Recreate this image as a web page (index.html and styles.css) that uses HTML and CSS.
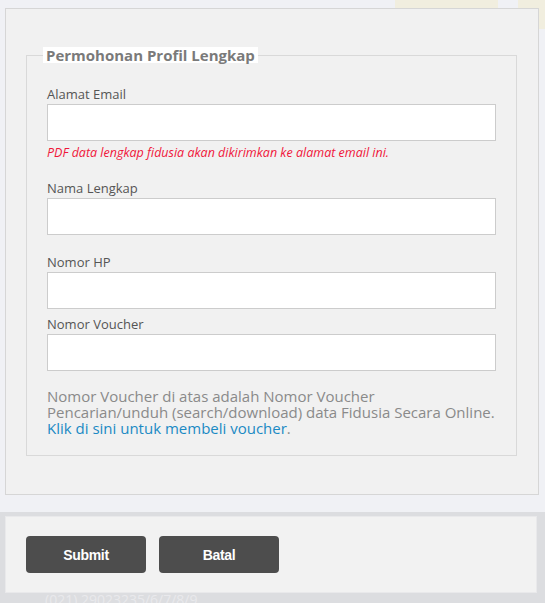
FILE: index.html
```html
<!DOCTYPE html>
<html lang="id">
<head>
<meta charset="utf-8">
<title>Permohonan Profil Lengkap</title>
<link rel="stylesheet" href="styles.css">
</head>
<body>
<div class="backdrop">
  <div class="bg-tab bg-tab-a"></div>
  <div class="bg-tab bg-tab-b"></div>
  <div class="bg-footer"><span class="bg-phone">(021) 29023235/6/7/8/9</span></div>
</div>
<div class="page">
  <div class="panel">
    <fieldset class="box">
      <legend class="box-title">Permohonan Profil Lengkap</legend>
      <div class="group g-email">
        <label class="lbl">Alamat Email</label>
        <input class="field" type="text">
        <p class="note">PDF data lengkap fidusia akan dikirimkan ke alamat email ini.</p>
      </div>
      <div class="group g-name">
        <label class="lbl">Nama Lengkap</label>
        <input class="field" type="text">
      </div>
      <div class="group g-hp">
        <label class="lbl">Nomor HP</label>
        <input class="field" type="text">
      </div>
      <div class="group g-voucher">
        <label class="lbl">Nomor Voucher</label>
        <input class="field" type="text">
      </div>
      <p class="help">Nomor Voucher di atas adalah Nomor Voucher<br>Pencarian/unduh (search/download) data Fidusia Secara Online.<br><a class="link" href="#">Klik di sini untuk membeli voucher</a>.</p>
    </fieldset>
  </div>
  <div class="actions">
    <button class="btn" type="button">Submit</button>
    <button class="btn" type="button">Batal</button>
  </div>
</div>
</body>
</html>
```
FILE: styles.css
```css
html, body {
  margin: 0;
  padding: 0;
}
body {
  background: #f0f1f5;
  font-family: "Open Sans", "Noto Sans", sans-serif;
  width: 545px;
  height: 603px;
  overflow: hidden;
  position: relative;
}
.backdrop {
  position: absolute;
  inset: 0;
  z-index: 0;
}
.bg-tab {
  position: absolute;
  background: #f1eedf;
}
.bg-tab-a {
  left: 395px;
  top: 0;
  width: 103px;
  height: 10px;
}
.bg-tab-b {
  left: 518px;
  top: 0;
  width: 27px;
  height: 29px;
}
.bg-footer {
  position: absolute;
  left: 0;
  right: 0;
  top: 512px;
  bottom: 0;
  background: #dcdde0;
}
.bg-phone {
  position: absolute;
  left: 45px;
  top: 80px;
  font-size: 14px;
  line-height: 16px;
  color: #e9e9ec;
}
.page {
  position: relative;
  z-index: 1;
  padding: 8px 6px 0 5px;
}
.panel {
  background: #f1f1f1;
  border: 1px solid #d6d6d6;
  height: 487px;
  box-sizing: border-box;
  padding: 38px 21px 0 20px;
}
.box {
  margin: 0;
  border: 1px solid #d9d9d9;
  padding: 21px 20px 19px 20px;
  min-width: 0;
}
.box-title {
  background: #ffffff;
  color: #7a7a7a;
  font-weight: 700;
  font-size: 15px;
  line-height: 16px;
  padding: 0 3px;
  margin-left: -4px;
}
.group {
  display: flex;
  flex-direction: column;
}
.lbl {
  font-size: 13px;
  line-height: 20px;
  color: #555555;
}
.field {
  height: 37px;
  box-sizing: border-box;
  border: 1px solid #cccccc;
  background: #ffffff;
  margin: 0;
  padding: 6px 10px;
  width: 100%;
}
.note {
  margin: 4px 0 0 0;
  font-size: 12.5px;
  line-height: 16px;
  font-style: italic;
  color: #f0163a;
}
.g-email { margin-bottom: 17px; }
.g-name { margin-bottom: 17px; }
.g-hp { margin-bottom: 5px; }
.help {
  margin: 17px 0 0 0;
  font-size: 15px;
  line-height: 16px;
  color: #8a8a8a;
}
.link {
  color: #1b8ac4;
  text-decoration: none;
}
.actions {
  margin-top: 21px;
  background: #f2f2f2;
  height: 77px;
  box-sizing: border-box;
  padding: 19px 20px;
  display: flex;
  gap: 13px;
  margin-right: 2px;
  border: 1px solid #e9e9eb;
}
.btn {
  width: 120px;
  height: 37px;
  border: none;
  border-radius: 4px;
  background: #4d4d4d;
  color: #ffffff;
  font-family: "Liberation Sans", Arial, sans-serif;
  font-weight: 700;
  font-size: 14px;
  letter-spacing: -0.3px;
}
```
